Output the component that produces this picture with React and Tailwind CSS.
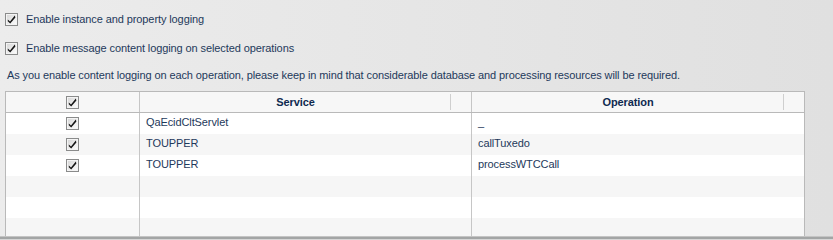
import React from 'react';

function Check({ className = '' }) {
  return (
    <svg width="13" height="13" viewBox="0 0 13 13" className={className}>
      <defs>
        <linearGradient id="cbg" x1="0" y1="0" x2="1" y2="1">
          <stop offset="0" stopColor="#d8d8d8" />
          <stop offset="1" stopColor="#fbfbfb" />
        </linearGradient>
      </defs>
      <rect x="0.5" y="0.5" width="12" height="12" fill="#f4f4f4" stroke="#8a8b8b" />
      <rect x="2" y="2" width="9" height="9" fill="url(#cbg)" />
      <path d="M2.8 6.4 L5 8.4 L9.8 2.6 L10.4 4.4 L5.2 10.6 L2.8 8.2 Z" fill="#151515" />
    </svg>
  );
}

const rows = [
  { service: 'QaEcidCltServlet', op: '_' },
  { service: 'TOUPPER', op: 'callTuxedo' },
  { service: 'TOUPPER', op: 'processWTCCall' },
  null,
  null,
  null,
];

export default function App() {
  return (
    <div
      className="w-[833px] h-[240px] overflow-hidden flex flex-col bg-gradient-to-r from-[#ececec] to-[#e0e0e0] text-[11px] tracking-[-0.1px] text-[#1e395b]"
      style={{ fontFamily: 'Tahoma, "Liberation Sans", Arial, sans-serif' }}
    >
      <div className="flex items-center gap-[8px] pl-[5px] h-[13px] mt-[13px]">
        <Check />
        <span>Enable instance and property logging</span>
      </div>
      <div className="flex items-center gap-[8px] pl-[5px] h-[13px] mt-[16px]">
        <Check />
        <span>Enable message content logging on selected operations</span>
      </div>
      <div className="pl-[7px] mt-[14px] leading-[13px]">
        As you enable content logging on each operation, please keep in mind that considerable database and processing resources will be required.
      </div>
      <div className="flex-1 min-h-0 flex flex-col mt-[9px]">
        <div className="flex-1 min-h-0 ml-[5px] w-[800px] border border-b-0 border-[#b9b9b9] bg-white overflow-hidden">
          <div className="grid grid-cols-[133px_332px_1fr] h-[21px] bg-[#f7f7f7] border-b border-[#b9b9b9] font-bold text-[#0f2a4f]">
            <div className="flex items-center justify-center">
              <Check />
            </div>
            <div className="relative flex items-center justify-center border-l border-[#c6c6c6] pr-[20px]">
              Service
              <div className="absolute right-[20px] top-[2px] bottom-[2px] w-px bg-[#cfcfcf]" />
            </div>
            <div className="relative flex items-center justify-center border-l border-[#c6c6c6] pr-[20px]">
              Operation
              <div className="absolute right-[20px] top-[2px] bottom-[2px] w-px bg-[#cfcfcf]" />
            </div>
          </div>
          {rows.map((r, i) => (
            <div
              key={i}
              className={`grid grid-cols-[133px_332px_1fr] h-[21px] ${i % 2 === 0 ? 'bg-white' : 'bg-[#f6f6f6]'}`}
            >
              <div className="flex items-center justify-center">{r && <Check />}</div>
              <div className="flex items-center pl-[6px] border-l border-[#c6c6c6] pb-[2px]">{r && r.service}</div>
              <div className="flex items-center pl-[6px] border-l border-[#c6c6c6] pb-[2px]">{r && r.op}</div>
            </div>
          ))}
        </div>
        <div className="h-px bg-[#c4c4c4]" />
        <div className="h-[2px] bg-[#a3a5a5]" />
        <div className="h-px bg-[#d6d6d6]" />
      </div>
    </div>
  );
}
